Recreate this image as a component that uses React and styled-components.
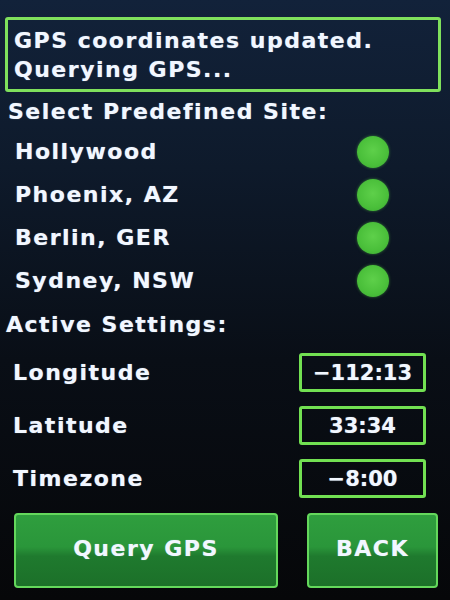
import React from "react";
import styled, { createGlobalStyle } from "styled-components";

const Global = createGlobalStyle`
  html, body { margin: 0; padding: 0; background: #07090c; }
  * { box-sizing: border-box; }
`;

const Screen = styled.div`
  width: 450px;
  height: 600px;
  overflow: hidden;
  padding: 17px 0 0 0;
  display: flex;
  flex-direction: column;
  background: linear-gradient(180deg, #12223a 0%, #0e1a2b 28%, #090e16 60%, #060709 100%);
  font-family: "DejaVu Sans", "Verdana", sans-serif;
  font-weight: bold;
  color: #f2f7ff;
  font-size: 22px;
  letter-spacing: 1.5px;
  text-shadow: 0 0 1px rgba(200, 230, 255, 0.6);
`;

const StatusBox = styled.div`
  margin: 0 9px 0 5px;
  height: 75px;
  border: 3px solid #7fe05c;
  border-radius: 3px;
  padding: 6px 0 0 6px;
  display: flex;
  flex-direction: column;
  line-height: 29px;
`;

const SectionTitle = styled.div`
  height: ${(p) => p.$h}px;
  display: flex;
  align-items: center;
  padding-left: ${(p) => p.$x}px;
`;

const SiteRow = styled.div`
  height: 43px;
  display: flex;
  align-items: center;
  justify-content: space-between;
  padding: 0 61px 0 15px;
`;

const Dot = styled.div`
  width: 32px;
  height: 32px;
  border-radius: 50%;
  background: radial-gradient(circle at 50% 45%, #5ed04a 0%, #4abf3a 60%, #3aa832 100%);
  box-shadow: 0 0 3px rgba(90, 210, 70, 0.5);
`;

const SettingRow = styled.div`
  height: 53px;
  display: flex;
  align-items: center;
  justify-content: space-between;
  padding: 0 24px 0 13px;
`;

const ValueBox = styled.div`
  width: 127px;
  height: 39px;
  border: 3px solid #72e052;
  border-radius: 3px;
  display: flex;
  align-items: center;
  justify-content: center;
  font-size: 21px;
  letter-spacing: 0;
`;

const ButtonRow = styled.div`
  margin-top: 8px;
  display: flex;
  gap: 29px;
  padding: 0 12px 0 14px;
`;

const Button = styled.div`
  width: ${(p) => p.$w}px;
  height: 75px;
  border: 2px solid #64d85c;
  border-radius: 4px;
  display: flex;
  align-items: center;
  justify-content: center;
  padding-bottom: 4px;
  background: linear-gradient(180deg, #2f9e3e 0%, #2a963a 45%, #1f7a2e 58%, #1c7029 100%);
  font-size: 22px;
  letter-spacing: 1.5px;
`;

const sites = ["Hollywood", "Phoenix, AZ", "Berlin, GER", "Sydney, NSW"];
const settings = [
  ["Longitude", "\u2212112:13"],
  ["Latitude", "33:34"],
  ["Timezone", "\u22128:00"],
];

export default function App() {
  return (
    <>
      <Global />
      <Screen>
        <StatusBox>
          <span>GPS coordinates updated.</span>
          <span>Querying GPS...</span>
        </StatusBox>
        <SectionTitle $h={38} $x={8}>Select Predefined Site:</SectionTitle>
        {sites.map((s) => (
          <SiteRow key={s}>
            <span>{s}</span>
            <Dot />
          </SiteRow>
        ))}
        <SectionTitle $h={44} $x={6}>Active Settings:</SectionTitle>
        {settings.map(([k, v]) => (
          <SettingRow key={k}>
            <span>{k}</span>
            <ValueBox>{v}</ValueBox>
          </SettingRow>
        ))}
        <ButtonRow>
          <Button $w={264}>Query GPS</Button>
          <Button $w={131}>BACK</Button>
        </ButtonRow>
      </Screen>
    </>
  );
}
